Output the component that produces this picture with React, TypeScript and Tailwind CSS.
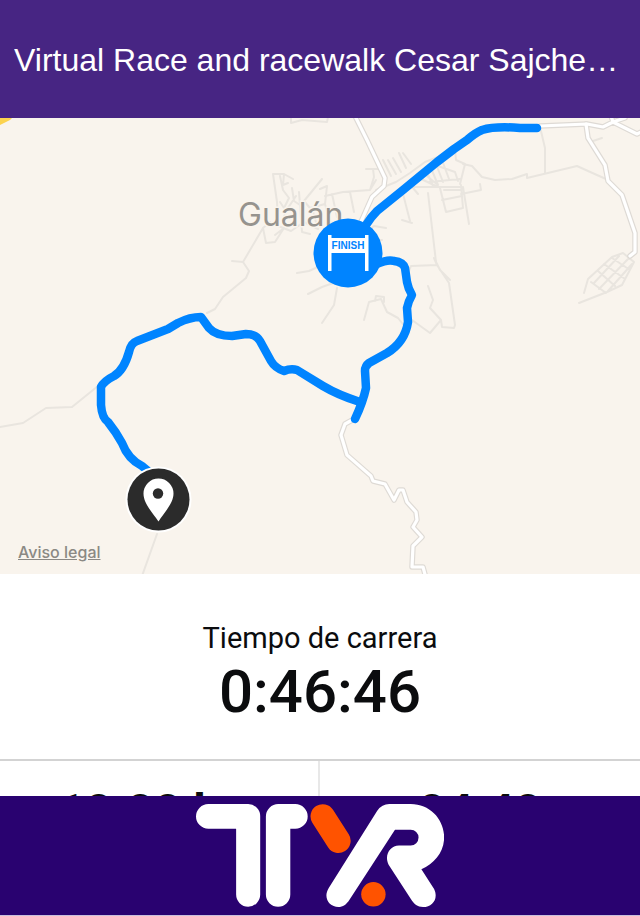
import React from 'react';

const ROUTE = [
  'M537 128L520 128Q495 126 482 130Q475 133 467 140L454 149L437 162L420 176L403 190L377 211Q371 217 366 225',
  'M377 264Q388 259 394 261Q403 262 405 268L407 282Q408 288 412 295Q408 302 407 308L408 322Q405 342 387 353L369 363Q365 366 365 371L366 388Q363 402 355 419',
  'M360 402Q338 395 323 386L297 370Q291 368 284 371Q275 368 271 361L260 341Q256 334 246 334L232 336Q216 336 209 328L201 317Q190 317 178 323L168 329L137 341Q131 343 129 352Q124 370 114 376Q104 381 101 387L101 405Q102 418 108 422Q116 432 122 443Q128 459 142 466L148 471',
];

const MAIN_ROADS = [
  'M355 116L367 140L385 178L384 186L372 197L360 224',
  'M540 126L587 124L603 127L613 122L637 134L645 130M611 116L613 122M613 122L625 118',
  'M586 124L588 138L605 165L608 181L622 195L635 233L635 252L630 256',
  'M354 419L345 424L341 435L347 455L371 476L373 481L385 484L394 500L399 490L403 490L407 502L416 512L417 520L413 527L422 537L413 546L412 567L423 567L426 578',
];

const SIDE_ROADS = [
  // west side and the road into town
  'M0 427L23 423L46 408L72 407L98 386',
  'M207 313L215 309L223 297L246 278L249 271L243 262L232 261M243 262L263 228L266 243L275 242L284 228L275 235M263 228L270 222',
  'M157 534L142 576',
  // streets behind the town name
  'M291 118L291 123L302 120L327 122L328 117M273 174L284 174L293 179M273 174L277 202L278 226M280 176L283 190L289 198L284 208L280 202M284 174L283 185L288 183M292 188L294 201L300 205L299 192M296 196L288 208L284 217M304 201L322 179M304 201L310 208L325 204L327 186L320 189M300 205L302 232L310 234M278 226L291 231L304 222L318 229M325 204L330 222L341 226M312 208L317 226',
  'M325 196L343 192L370 190L376 180M332 194L337 217M350 192L354 212M370 190L374 177L373 169M366 169L378 169M376 190L396 182L410 173L425 162L438 157M383 160L391 176M388 160L396 174M393 158L401 172M399 153L406 168M403 153L411 164',
  'M402 190L410 221M402 220L412 223M428 193L436 262M413 188L418 194',
  // street grid east of the centre
  'M417 177L438 187M423 173L438 185M426 170L433 186M431 168L438 185M436 164L443 182M442 160L449 179M429 182L460 179M438 166L455 172L458 181M414 187L461 187M440 188L446 212L463 208L461 185M444 190L460 190M442 200L462 196M463 187L469 224M461 194L481 190L480 184M455 150L456 160L465 164L460 184M463 164L472 166L482 177L495 180L512 179L527 174L527 178L577 166L588 171L606 179M540 127L545 148L545 173M593 141L602 138',
  // south of the centre
  'M297 273L309 271L320 266M308 294L322 287L336 282M322 323L334 305L337 288M364 320L369 302L381 299L387 312L398 318L406 328M375 301L376 296L384 297L384 302',
  'M411 266L437 265L434 258M411 266L407 276M437 265L449 283L455 325L454 328L442 327L441 320L430 333L412 320M436 262L440 270L450 280M428 286L433 300L430 308L441 320M362 235L374 226L386 228M368 241L382 240',
  // hamlet on the east side
  'M579 303L607 292L622 285L634 262L623 253L612 257L588 279L584 293M591 282L606 293M598 271L615 286M604 264L625 279M612 258L630 270M599 289L629 258M594 283L619 256M608 291L632 264',
];

const FULL_STROKE = { fill: 'none', strokeLinecap: 'round', strokeLinejoin: 'round' } as const;

export default function App() {
  return (
    <div className="flex h-screen flex-col bg-white font-[Roboto,sans-serif] text-[#0b0c0e]">
      <header className="flex h-[118px] shrink-0 items-center bg-[#472583] px-3.5 pt-0.5">
        <h1 className="w-full truncate font-['Liberation_Sans',sans-serif] text-[32px] leading-10 text-white">
          Virtual Race and racewalk Cesar Sajche…
        </h1>
      </header>

      <main className="min-h-0 flex-1 overflow-y-auto [scrollbar-width:none]">
        <div className="relative bg-[#f9f4ed]">
          <RaceMap />
          <a href="#legal" className="absolute bottom-3 left-[18px] font-[Inter,sans-serif] text-base leading-5 font-medium text-[#8b8984] underline">
            Aviso legal
          </a>
        </div>

        <section className="flex h-[185px] flex-col items-center pt-11">
          <h2 className="text-[29px] leading-10">Tiempo de carrera</h2>
          <p className="text-[60px] leading-[68px] font-medium">0:46:46</p>
        </section>

        <section className="grid grid-cols-2 border-t-2 border-[#d3d3d3] text-center">
          <Stat value="10.00 km" />
          <Stat value="04:40" last />
        </section>
      </main>

      <footer className="flex h-[120px] shrink-0 items-center justify-center border-b border-[#c9bfdc] bg-[#290270]">
        <TyrLogo />
      </footer>
    </div>
  );
}

function Stat({ value, last }: { value: string; last?: boolean }) {
  return (
    <div className={`pt-5 pb-8 ${last ? '' : 'border-r-2 border-[#e8e8e8]'}`}>
      <p className="text-[48px] leading-[62px] font-bold">{value}</p>
    </div>
  );
}

function RaceMap() {
  return (
    <svg viewBox="0 118 640 456" className="block w-full" role="img" aria-label="Mapa de la carrera">
      <path d="M0 116H14L10 120L0 125Z" fill="#fcd34f" />
      <g {...FULL_STROKE} stroke="#e9e5df" strokeWidth="2">
        {SIDE_ROADS.map((d) => <path key={d} d={d} />)}
      </g>
      <g {...FULL_STROKE} stroke="#dedad5" strokeWidth="5.5">
        {MAIN_ROADS.map((d) => <path key={d} d={d} />)}
      </g>
      <g {...FULL_STROKE} stroke="#ffffff" strokeWidth="3.2">
        {MAIN_ROADS.map((d) => <path key={d} d={d} />)}
      </g>

      <text x="238" y="226" className="font-[Inter,sans-serif] text-[32px]" fill="#96938e" stroke="#f9f4ed" strokeWidth="3" paintOrder="stroke">
        Gualán
      </text>

      <g {...FULL_STROKE} stroke="#0084ff" strokeWidth="8.5">
        {ROUTE.map((d) => <path key={d} d={d} />)}
      </g>

      {/* Finish marker */}
      <circle cx="348" cy="253" r="34.5" fill="#0084ff" />
      <path d="M328 235H331.500V238H365V235H368.500V271H365V253H331.500V271H328Z" fill="#fff" />
      <text x="348" y="249" textAnchor="middle" className="font-['Liberation_Sans',sans-serif] text-[10px] font-bold" fill="#0084ff">
        FINISH
      </text>

      {/* Start marker */}
      <circle cx="158.500" cy="499.500" r="33" fill="#fff" />
      <circle cx="158.500" cy="499.500" r="31" fill="#2b2b2b" />
      <path d="M158.500 521.500C153 513 143.500 504 143.500 493.500a15 15 0 0 1 30 0C173.500 504 163.500 513 158.500 521.500Z" fill="#fff" />
      <circle cx="158" cy="493.500" r="5.200" fill="#2b2b2b" />
    </svg>
  );
}

function TyrLogo() {
  return (
    <svg viewBox="48 42 742 308" className="h-[103px]" role="img" aria-label="TYR">
      <g fill="#fff">
        <path d="M85 42H204a36 36 0 0 1 36 37V313a36 36 0 0 1-72 0V116H85a37 37 0 0 1 0-74Z" />
        <path d="M345 42a37 37 0 0 1 0 74H330V313a36.500 36.500 0 0 1-73 0V79a37 37 0 0 1 37-37Z" />
        <path d="M626 42H690C750 42 790 90 790 142C790 185 762 220 722 237L760 296C774 325 755 350 727 350C710 350 700 341 693 330L624 224C610 195 628 166 655 166H690a23.500 23.500 0 0 0 0-47H643L507 328C498 342 487 350 474 350C446 350 427 322 445 293L590 62Q604 42 626 42Z" />
      </g>
      <path d="M427 79L474 152" stroke="#ff5300" strokeWidth="73" strokeLinecap="round" />
      <circle cx="578.500" cy="312" r="36.500" fill="#ff5300" />
    </svg>
  );
}
